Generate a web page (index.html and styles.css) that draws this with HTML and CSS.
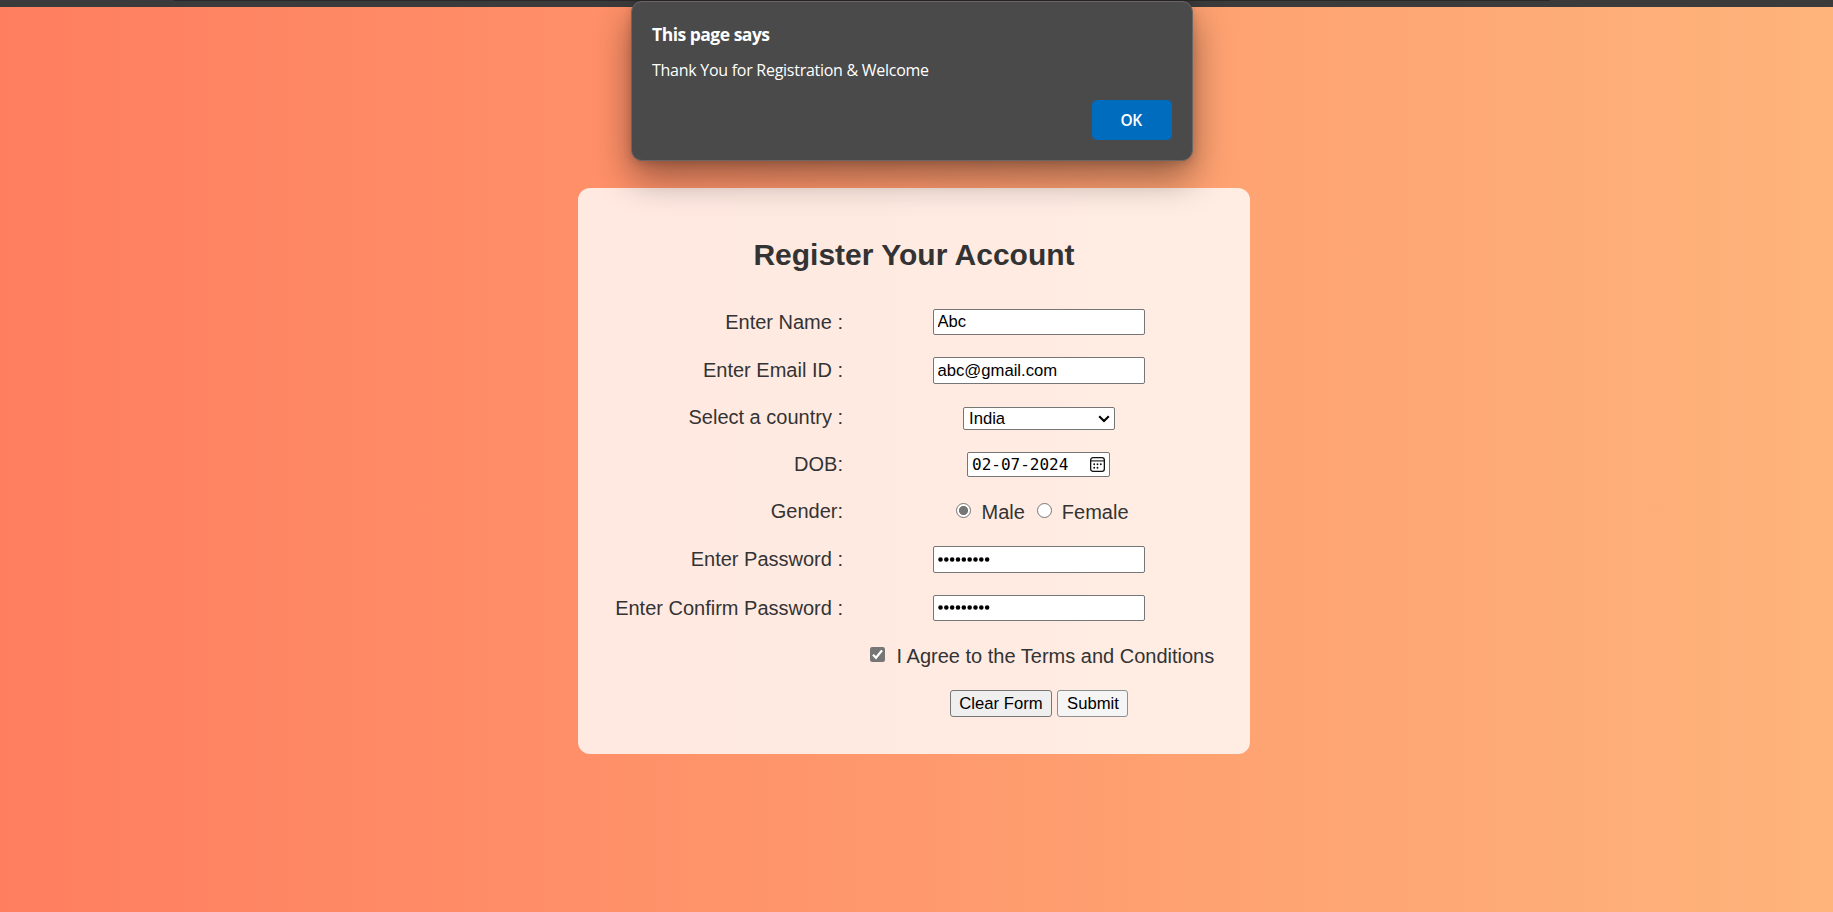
FILE: index.html
```html
<!DOCTYPE html>
<html lang="en">
<head>
<meta charset="utf-8">
<title>Register Your Account</title>
<link rel="stylesheet" href="styles.css">
</head>
<body>
<div class="toolbar-edge"><div class="toolbar-line"></div></div>
<main class="page">
  <form class="card">
    <h1 class="title">Register Your Account</h1>
    <div class="rows">
      <label class="label flush">Enter Name :</label>
      <div class="field"><input class="text" type="text" value="Abc"></div>
      <label class="label">Enter Email ID :</label>
      <div class="field"><input class="text tall" type="text" value="abc@gmail.com"></div>
      <label class="label raised">Select a country :</label>
      <div class="field"><div class="select"><span>India</span>
        <svg class="chevron" viewBox="0 0 12 8"><path d="M1.2 1.2 6 6 10.8 1.2" fill="none" stroke="#000" stroke-width="2.1"/></svg></div></div>
      <label class="label raised">DOB:</label>
      <div class="field field-date"><div class="date"><span class="date-value">02-07-2024</span>
        <svg class="calendar" viewBox="0 0 15 15"><rect x=".65" y=".65" width="13.7" height="13.7" rx="2.4" fill="none" stroke="#111" stroke-width="1.3"/><path d="M1 3.9h13" stroke="#111" stroke-width="1.1"/><g fill="#111"><circle cx="4.2" cy="7.3" r=".95"/><circle cx="7.5" cy="7.3" r=".95"/><circle cx="10.8" cy="7.3" r=".95"/><circle cx="4.2" cy="10.8" r=".95"/><circle cx="7.5" cy="10.8" r=".95"/></g></svg></div></div>
      <label class="label">Gender:</label>
      <div class="field options"><span class="radio on"></span><span class="option male">Male</span><span class="radio"></span><span class="option female">Female</span></div>
      <label class="label">Enter Password :</label>
      <div class="field"><div class="text tall dots"><svg class="mask" viewBox="0 0 52 5"><path d="M2.5 2.5h47" stroke="#000" stroke-width="4.6" stroke-linecap="round" stroke-dasharray="0 5.83"/></svg></div></div>
      <label class="label flush">Enter Confirm Password :</label>
      <div class="field"><div class="text dots"><svg class="mask" viewBox="0 0 52 5"><path d="M2.5 2.5h47" stroke="#000" stroke-width="4.6" stroke-linecap="round" stroke-dasharray="0 5.83"/></svg></div></div>
      <span></span>
      <div class="field agree"><svg class="check" viewBox="0 0 15 15"><rect width="15" height="15" rx="2.2" fill="#767676"/><path d="M3 7.7 6 10.8 12 3.4" fill="none" stroke="#fff" stroke-width="2.3"/></svg><span class="option">I Agree to the Terms and Conditions</span></div>
      <span></span>
      <div class="field buttons"><button class="btn clear" type="button">Clear Form</button><button class="btn submit" type="button">Submit</button></div>
    </div>
  </form>
</main>
<div class="dialog" role="alertdialog">
  <div class="dialog-title"><span>This page says</span></div>
  <div class="dialog-message"><span>Thank You for Registration &amp; Welcome</span></div>
  <button class="ok" type="button">OK</button>
</div>
</body>
</html>
```
FILE: styles.css
```css
* { box-sizing: border-box; }
body {
  margin: 0;
  height: 912px;
  overflow: hidden;
  font-family: "Liberation Sans", Arial, sans-serif;
  font-size: 20px;
  color: #333;
  background: linear-gradient(to right, #ff7e5f, #feb47b);
}
.toolbar-edge { height: 7px; background: #3b3b3b; }
.toolbar-line { height: 1px; margin: 0 283px 0 174px; background: #292929; }
.page { display: flex; justify-content: center; padding: 181px 5px 0 0; }
.card {
  width: 672px;
  height: 566px;
  border-radius: 12px;
  background: rgba(255, 255, 255, .8);
}
.title {
  margin: 0;
  padding-top: 50px;
  height: 110px;
  font-size: 30px;
  line-height: 34px;
  text-align: center;
}
.rows {
  display: grid;
  grid-template-columns: 265px 346px;
  column-gap: 23px;
  grid-template-rows: 48px 49px 47px 46px 47px 49px 48px 47px 49px;
  align-items: center;
}
.label { padding-bottom: 2px; text-align: right; white-space: nowrap; line-height: 24px; }
.label.flush { padding-bottom: 0; }
.label.raised { padding-bottom: 3px; }
.field { display: flex; justify-content: center; align-items: center; width: 346px; white-space: nowrap; }
.text {
  width: 212px;
  height: 26px;
  padding: 0 3.5px;
  border: 1px solid #767676;
  border-radius: 2px;
  background: #fff;
  color: #000;
  font: 16.67px "Liberation Sans", Arial, sans-serif;
}
.tall { height: 27px; }
.dots { display: flex; align-items: center; padding: 0 4px 1px; }
.mask { width: 52px; height: 5px; }
.select {
  display: flex;
  justify-content: space-between;
  align-items: center;
  width: 152px;
  height: 23px;
  padding: 0 4px 0 5px;
  border: 1px solid #767676;
  border-radius: 2px;
  background: #fff;
  color: #000;
  font-size: 16.67px;
}
.chevron { width: 12px; height: 8px; }
.field-date { align-self: start; padding: 10px 1px 0 0; }
.date {
  display: flex;
  justify-content: space-between;
  align-items: center;
  width: 143px;
  height: 25px;
  padding: 0 4px;
  border: 1px solid #767676;
  border-radius: 2px;
  background: #fff;
  color: #000;
}
.date-value { font: 16px "DejaVu Sans Mono", monospace; }
.calendar { width: 15px; height: 15px; }
.radio { width: 15px; height: 15px; margin-bottom: 2px; border: 1px solid #767676; border-radius: 50%; background: #fff; }
.radio.on { background: radial-gradient(circle, #767676 4.2px, #fff 5px); }
.options { padding-left: 7px; }
.option { padding-top: 2px; }
.male { margin: 0 12px 0 10px; }
.female { margin-left: 10px; }
.agree { justify-content: flex-start; padding-left: 4px; }
.check { flex: none; width: 15px; height: 15px; margin: 0 11.6px 2px 0; }
.buttons { gap: 5px; }
.btn {
  height: 27px;
  padding: 0;
  border: 1px solid #767676;
  border-radius: 3px;
  background: #efefef;
  color: #000;
  font: 16.67px "Liberation Sans", Arial, sans-serif;
}
.clear { width: 102px; }
.submit { width: 71px; padding-left: 1px; border-color: #8f8f8f; background: #f5f5f5; }
.dialog {
  position: absolute;
  left: 631px;
  top: 1px;
  width: 562px;
  height: 160px;
  padding: 20px 20px 0;
  border: 1px solid #6b6664;
  border-radius: 11px;
  background: #4a4a4a;
  color: #fff;
  font-family: "Open Sans", "Noto Sans", sans-serif;
  box-shadow: 0 16px 36px rgba(0, 0, 0, .42), 0 2px 8px rgba(0, 0, 0, .15);
}
.dialog-title { height: 24px; font-size: 17.5px; font-weight: 700; line-height: 24px; letter-spacing: -.5px; }
.dialog-message { height: 24px; margin-top: 12px; font-size: 16px; line-height: 24px; letter-spacing: -.27px; }
.ok {
  display: block;
  width: 80px;
  height: 40px;
  margin: 18px 0 0 auto;
  padding: 0 2px 1px 0;
  border: 0;
  border-radius: 5px;
  background: #006cbe;
  color: #fff;
  font: 600 15.5px "Open Sans", "Noto Sans", sans-serif;
  letter-spacing: -.6px;
}
```
